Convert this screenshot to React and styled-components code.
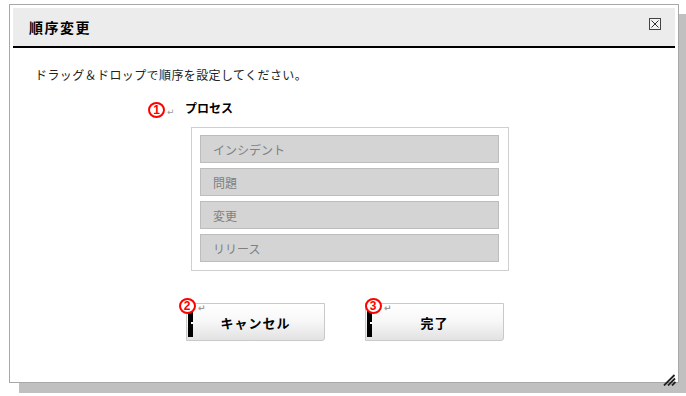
import styled, { createGlobalStyle } from "styled-components"

const GlobalStyle = createGlobalStyle`
html, body {
  margin: 0;
  padding: 0;
  background: #fff;
}
body {
  width: 686px;
  height: 396px;
  overflow: hidden;
  font-family: "Noto Sans CJK JP", "Noto Sans", sans-serif;
}
`

const items = ["インシデント", "問題", "変更", "リリース"]

export default function App(){
    return(
        <Page>
            <GlobalStyle/>
            <Dialog>
                <TitleBar>
                    <Title>順序変更</Title>
                    <CloseButton>
                        <svg width="10" height="10" viewBox="0 0 10 10">
                            <path d="M1.5 1.5 L8.5 8.5 M8.5 1.5 L1.5 8.5" stroke="#333" strokeWidth="1"/>
                        </svg>
                    </CloseButton>
                </TitleBar>
                <Instruction>ドラッグ＆ドロップで順序を設定してください。</Instruction>
                <Heading>
                    <Marker>1</Marker>
                    <ReturnMark>↵</ReturnMark>
                    <Label>プロセス</Label>
                </Heading>
                <ListBox>
                    {items.map(item => <Item key={item}>{item}</Item>)}
                </ListBox>
                <Buttons>
                    <Button>
                        <Caret/>
                        <Annotation $shift={-8}>
                            <Marker>2</Marker>
                            <ReturnMark>↵</ReturnMark>
                        </Annotation>
                        キャンセル
                    </Button>
                    <Button>
                        <Caret/>
                        <Annotation $shift={-1}>
                            <Marker>3</Marker>
                            <ReturnMark>↵</ReturnMark>
                        </Annotation>
                        完了
                    </Button>
                </Buttons>
                <Grip>
                    <svg width="13" height="12" viewBox="0 0 13 12">
                        <path d="M1 11.5 L11.5 1 M5 11.5 L12 4.5 M9 11.5 L12.5 8" stroke="#222" strokeWidth="1.8"/>
                    </svg>
                </Grip>
            </Dialog>
        </Page>
    );
}

const Page = styled.div`
padding: 4px 0 0 9px;
`

const Dialog = styled.div`
position: relative;
width: 670px;
height: 379px;
box-sizing: border-box;
border: 1px solid #a8a8a8;
padding: 3px;
background: #fff;
box-shadow: 10px 10px 0 #c0c0c0;
display: flex;
flex-direction: column;
`

const TitleBar = styled.div`
height: 38px;
flex-shrink: 0;
background: #ececec;
border-bottom: 2px solid #000;
display: flex;
align-items: center;
justify-content: space-between;
padding: 0 14px 0 16px;
`

const Title = styled.span`
font-size: 14px;
font-weight: 700;
letter-spacing: 1.5px;
line-height: 16px;
color: #000;
`

const CloseButton = styled.div`
width: 12px;
height: 12px;
box-sizing: border-box;
border: 1px solid #444;
margin-top: -6px;
display: flex;
align-items: center;
justify-content: center;
background: #f4f4f4;
`

const Instruction = styled.p`
margin: 19px 0 0 22px;
font-size: 12px;
line-height: 16px;
letter-spacing: 0.4px;
color: #222;
`

const Heading = styled.div`
display: flex;
align-items: flex-start;
margin: 19px 0 0 135px;
height: 16px;
`

const Marker = styled.span`
display: inline-flex;
align-items: center;
justify-content: center;
width: 17px;
height: 16px;
box-sizing: border-box;
border: 2px solid #f00;
border-radius: 50%;
background: #fff;
color: #f00;
font-family: "Liberation Sans", sans-serif;
font-size: 12px;
font-weight: 700;
line-height: 1;
flex-shrink: 0;
`

const ReturnMark = styled.span`
width: 10px;
margin: 6px 0 0 2px;
font-family: "DejaVu Sans", sans-serif;
font-size: 9px;
line-height: 9px;
color: #999;
`

const Label = styled.span`
margin: 0 0 0 8px;
font-size: 12px;
font-weight: 700;
line-height: 12px;
color: #000;
`

const ListBox = styled.div`
width: 318px;
box-sizing: border-box;
margin: 9px 0 0 178px;
border: 1px solid #cfcfcf;
padding: 7px 9px 8px 8px;
display: flex;
flex-direction: column;
gap: 5px;
`

const Item = styled.div`
height: 28px;
box-sizing: border-box;
border: 1px solid #bdbdbd;
background: #d4d4d4;
padding-left: 12px;
display: flex;
align-items: center;
font-size: 12px;
color: #808080;
`

const Buttons = styled.div`
display: flex;
gap: 40px;
margin: 32px 0 0 173px;
`

const Button = styled.div`
position: relative;
width: 139px;
height: 38px;
box-sizing: border-box;
border: 1px solid #c9c9c9;
border-radius: 0 0 3px 0;
background: linear-gradient(#ffffff, #f8f8f8 45%, #e2e2e2);
display: flex;
align-items: center;
justify-content: center;
font-size: 13px;
font-weight: 700;
letter-spacing: 1px;
color: #000;
`

const Caret = styled.span`
position: absolute;
left: 1px;
top: 6px;
width: 5px;
height: 27px;
background: #000;
&::after {
  content: "";
  position: absolute;
  right: 0;
  top: 12px;
  width: 2px;
  height: 2px;
  background: #fff;
}
`

const Annotation = styled.div`
position: absolute;
left: ${p => p.$shift}px;
top: -6px;
display: flex;
align-items: flex-start;
`

const Grip = styled.div`
position: absolute;
right: 2px;
bottom: 3px;
width: 13px;
height: 12px;
`
